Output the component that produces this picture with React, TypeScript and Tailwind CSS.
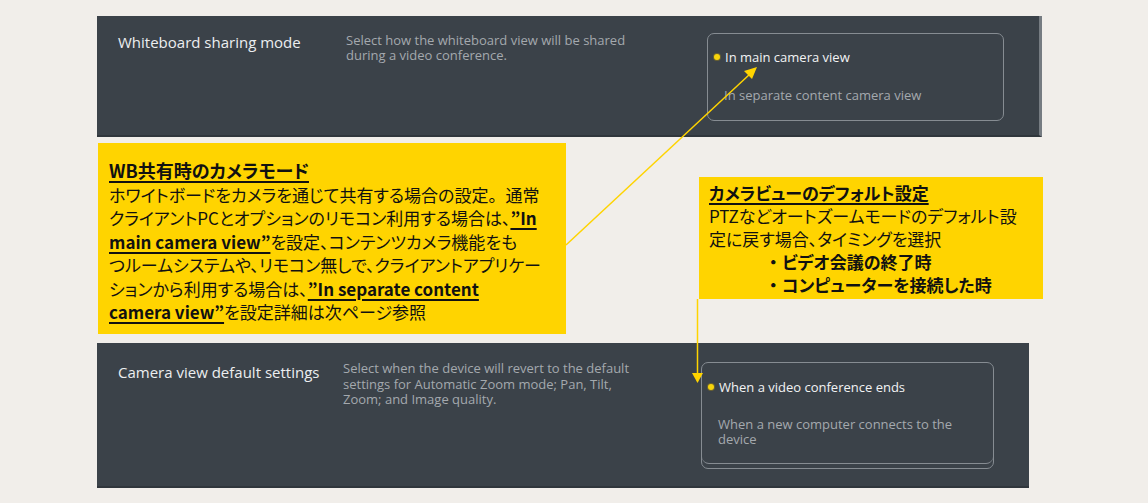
import type { FC, ReactNode } from 'react';

const latin = "font-['Open_Sans','Noto_Sans',sans-serif]";
const jp = "font-['Noto_Sans_CJK_JP','Noto_Sans_CJK_SC',sans-serif] [font-feature-settings:'palt']";

const Dot: FC = () => (
  <span className="mr-[5px] inline-block h-[6px] w-[6px] shrink-0 rounded-full bg-[#f7d40c] ring-1 ring-[#6b6230]" />
);

const Em: FC<{ children: ReactNode }> = ({ children }) => (
  <span className="font-bold underline decoration-[1.5px] underline-offset-[3px]">{children}</span>
);

// arrows drawn on top of the slide
const Arrows: FC = () => (
  <svg className="pointer-events-none absolute left-0 top-0 z-10" width="1148" height="503" viewBox="0 0 1148 503">
    <line x1="566" y1="245" x2="750" y2="74" stroke="#ffd400" strokeWidth="1.5" />
    <polygon points="757,67 752,79 744,71" fill="#ffd400" />
    <line x1="697.5" y1="299" x2="697.5" y2="375" stroke="#ffd400" strokeWidth="1.5" />
    <polygon points="692,373 703,373 697.5,383" fill="#ffd400" />
  </svg>
);

export default function App() {
  return (
    <div className="relative h-[503px] w-[1148px] overflow-hidden bg-[#f1eeea] pt-[16px]">
      <Arrows />

      {/* Whiteboard sharing mode */}
      <section className={`ml-[97px] flex h-[121px] w-[945px] border-r-[3px] border-b-[2px] border-r-[#767c82] border-b-[#30363c] bg-[#3b4249] ${latin}`}>
        <div className="w-[249px] shrink-0 pl-[21px] pt-[16px] text-[15px] leading-[20px] text-[#eceef0]">
          Whiteboard sharing mode
        </div>
        <div className="w-[361px] shrink-0 whitespace-nowrap pt-[17px] text-[13px] leading-[14.5px] text-[#a4a9ae]">
          Select how the whiteboard view will be shared
          <br />
          during a video conference.
        </div>
        <div className="mt-[17px] h-[88px] w-[297px] shrink-0 rounded-[7px] border-[1.5px] border-[#868c92] text-[13px]">
          <div className="flex items-center pl-[6px] pt-[13px] leading-[20px] text-[#f2f3f4]">
            <Dot />
            In main camera view
          </div>
          <div className="pl-[16px] pt-[18px] leading-[20px] text-[#a4a9ae]">In separate content camera view</div>
        </div>
      </section>

      {/* callouts */}
      <div className={`flex h-[197px] text-[#111] ${jp}`}>
        <div className="ml-[98px] mt-[6px] h-[191px] w-[468px] shrink-0 whitespace-nowrap bg-[#ffd400] pl-[11px] pt-[16px] text-[17px] leading-[23.5px]">
          <div className="text-[18px]"><Em>WB共有時のカメラモード</Em></div>
          <div>
            ホワイトボードをカメラを通じて共有する場合の設定<span className="[font-feature-settings:normal]">。</span>通常
          </div>
          <div>
            クライアントPCとオプションのリモコン利用する場合は、<Em>”In</Em>
          </div>
          <div>
            <Em>main camera view”</Em>を設定、コンテンツカメラ機能をも
          </div>
          <div>つルームシステムや、リモコン無しで、クライアントアプリケー</div>
          <div>
            ションから利用する場合は、<Em>”In separate content</Em>
          </div>
          <div>
            <Em>camera view”</Em>を設定詳細は次ページ参照
          </div>
        </div>

        <div className="ml-[133px] mt-[40px] h-[122px] w-[344px] shrink-0 whitespace-nowrap bg-[#ffd400] pl-[10px] pt-[4px] text-[17px] leading-[23px]">
          <div><Em>カメラビューのデフォルト設定</Em></div>
          <div>PTZなどオートズームモードのデフォルト設</div>
          <div>定に戻す場合、タイミングを選択</div>
          <ul className="pl-[60px] font-bold">
            <li className="flex"><span className="w-[13px]">・</span>ビデオ会議の終了時</li>
            <li className="flex"><span className="w-[13px]">・</span>コンピューターを接続した時</li>
          </ul>
        </div>
      </div>

      {/* Camera view default settings */}
      <section className={`ml-[97px] mt-[9px] flex h-[145px] w-[932px] border-b-[2px] border-b-[#30363c] bg-[#3b4249] ${latin}`}>
        <div className="w-[246px] shrink-0 pl-[21px] pt-[19px] text-[15px] leading-[20px] text-[#eceef0]">
          Camera view default settings
        </div>
        <div className="w-[358px] shrink-0 whitespace-nowrap pt-[18px] text-[13px] leading-[15.5px] text-[#a4a9ae]">
          Select when the device will revert to the default
          <br />
          settings for Automatic Zoom mode; Pan, Tilt,
          <br />
          Zoom; and Image quality.
        </div>
        <div className="mt-[19px] h-[107px] w-[293px] shrink-0 rounded-[7px] border-[1.5px] border-[#868c92] text-[13px]">
          <div className="h-[101px] rounded-b-[7px] border-b-[1.5px] border-[#868c92]">
            <div className="flex items-center pl-[6px] pt-[14px] leading-[20px] text-[#f2f3f4]">
              <Dot />
              When a video conference ends
            </div>
            <div className="pl-[16px] pt-[20px] leading-[15px] text-[#a4a9ae]">
              When a new computer connects to the
              <br />
              device
            </div>
          </div>
        </div>
      </section>
    </div>
  );
}
